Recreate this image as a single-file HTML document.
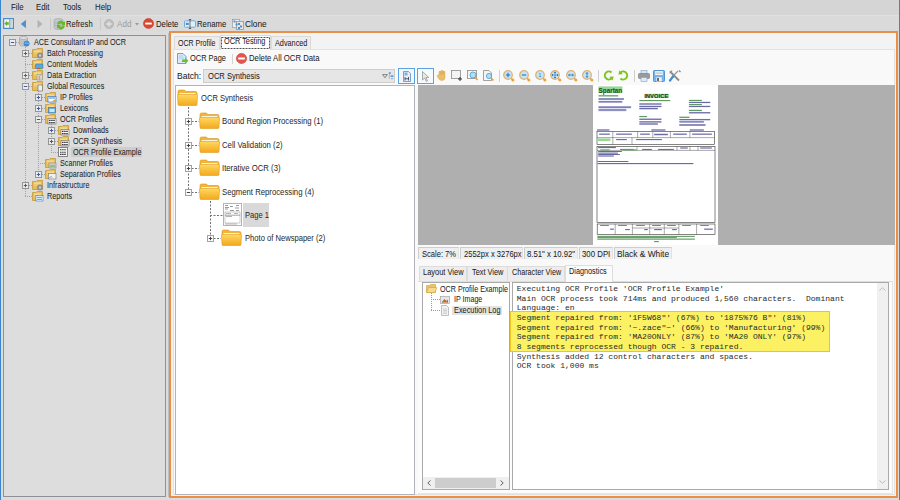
<!DOCTYPE html>
<html><head><meta charset="utf-8"><style>
*{margin:0;padding:0;box-sizing:border-box}
html,body{width:900px;height:500px;overflow:hidden}
body{position:relative;background:#e9e9e9;font-family:"Liberation Sans",sans-serif;font-size:9px;color:#1c1c1c}
.t{-webkit-text-stroke:.04px currentColor}
.tb{font-size:9.5px;-webkit-text-stroke:0;color:#262626}
.a{position:absolute}
.t{position:absolute;white-space:nowrap;transform:scaleX(.80);transform-origin:0 50%;line-height:11px;height:11px}
.m{position:absolute;white-space:pre;font-family:"Liberation Mono",monospace;font-size:8.04px;line-height:9.65px;color:#2a2a2a}
svg{position:absolute;overflow:visible}
</style></head><body>
<div class="a" style="left:0px;top:0px;width:900px;height:500px;background:#dcdcdc"></div>
<div class="a" style="left:0px;top:0px;width:1px;height:500px;background:#3b87cf"></div>
<div class="a" style="left:899px;top:0px;width:1px;height:500px;background:#3b87cf"></div>
<div class="a" style="left:1px;top:0px;width:898px;height:15px;background:#d5d5d5"></div>
<div class="t" style="left:10.6px;top:2px;;transform:scaleX(0.87)">File</div>
<div class="t" style="left:35.5px;top:2px;;transform:scaleX(0.87)">Edit</div>
<div class="t" style="left:63.2px;top:2px;;transform:scaleX(0.87)">Tools</div>
<div class="t" style="left:95px;top:2px;;transform:scaleX(0.87)">Help</div>
<div class="a" style="left:1px;top:15px;width:898px;height:16px;background:#dadada;border-top:1px solid #e0e0e0"></div>
<svg style="left:3px;top:18px" width="11" height="11" viewBox="0 0 11 11"><rect x="0.6" y="0.6" width="9.8" height="9.8" fill="#f2f2f2" stroke="#4a8fc9" stroke-width="1.2"/><rect x="6.4" y="1.2" width="1" height="8.6" fill="#4a8fc9"/><rect x="7.6" y="2" width="2.2" height="7" fill="#d4d4d4"/><path d="M1.3 5.5L4 3V4.3H5.8V6.7H4V8Z" fill="#62b52e"/></svg>
<svg style="left:20px;top:19px" width="7" height="10" viewBox="0 0 7 10"><path d="M6 0.8V9.2L0.8 5Z" fill="#4f92cf"/></svg>
<svg style="left:36.5px;top:19px" width="6" height="10" viewBox="0 0 6 10"><path d="M0.5 0.8V9.2L5.5 5Z" fill="#b3b3b3"/></svg>
<div class="a" style="left:50px;top:18px;width:1px;height:12px;background:#c8c8c8"></div>
<svg style="left:53px;top:18px" width="13" height="12" viewBox="0 0 13 12"><path d="M1 2.2Q1 0.5 5.5 0.5Q10 0.5 10 2.2V9.8Q10 11.5 5.5 11.5Q1 11.5 1 9.8Z" fill="#c3c7cb" stroke="#9ea3a8" stroke-width=".6"/><path d="M1.2 4.5Q5.5 6 9.8 4.5M1.2 7.2Q5.5 8.7 9.8 7.2" fill="none" stroke="#a5aaae" stroke-width=".6"/><path d="M4.2 6.3A3.6 3.6 0 0 1 10.8 4.2L12 3.2V7.3H8.2L9.4 6.2A2.2 2.2 0 0 0 5.8 6.6Z" fill="#66b82c"/><path d="M11.8 7.8A3.6 3.6 0 0 1 5.2 9.8L4 10.8V6.8H7.8L6.6 7.9A2.2 2.2 0 0 0 10.2 7.4Z" fill="#66b82c"/></svg>
<div class="t" style="left:66px;top:19px;;transform:scaleX(0.845)">Refresh</div>
<div class="a" style="left:100px;top:18px;width:1px;height:12px;background:#c8c8c8"></div>
<svg style="left:103.5px;top:18.5px" width="10" height="10" viewBox="0 0 10 10"><circle cx="5" cy="5" r="4.6" fill="#bdbdbd" stroke="#aaa" stroke-width=".5"/><path d="M5 2.3V7.7M2.3 5H7.7" stroke="#e4e4e4" stroke-width="1.3"/></svg>
<div class="t" style="left:116.5px;top:19px;color:#a0a0a0;transform:scaleX(0.9)">Add</div>
<svg style="left:135px;top:23px" width="4" height="3" viewBox="0 0 4 3"><path d="M0 0H4L2 2.5Z" fill="#999"/></svg>
<svg style="left:143px;top:18px" width="11" height="11" viewBox="0 0 11 11"><circle cx="5.5" cy="5.5" r="5.1" fill="#d9462f" stroke="#c23a2a" stroke-width=".5"/><rect x="2.2" y="4.6" width="6.6" height="1.9" fill="#fff"/></svg>
<div class="t" style="left:156.3px;top:19px;;transform:scaleX(0.86)">Delete</div>
<svg style="left:184px;top:19px" width="12" height="10" viewBox="0 0 12 10"><rect x="0.5" y="1.8" width="11" height="6.4" rx="1" fill="#e2eef8" stroke="#5c9bd2" stroke-width=".8"/><rect x="1.8" y="3.8" width="3" height="2.2" fill="#4a8fd0"/><path d="M6 0.5V9.5M4.8 0.5H7.2M4.8 9.5H7.2" stroke="#3a3a3a" stroke-width=".7"/></svg>
<div class="t" style="left:197.3px;top:19px;;transform:scaleX(0.86)">Rename</div>
<svg style="left:232px;top:18.5px" width="12" height="11" viewBox="0 0 12 11"><rect x="0.5" y="0.5" width="7" height="8" fill="#f0f0f0" stroke="#8a8a8a" stroke-width=".6"/><rect x="4.5" y="2.5" width="7" height="8" fill="#e6e6e6" stroke="#7a7a7a" stroke-width=".6"/><rect x="1.5" y="1.5" width="2" height="2" fill="#4a8fd0"/><rect x="3.5" y="4.5" width="2" height="2" fill="#4a8fd0"/><rect x="6" y="4" width="2" height="2" fill="#4a8fd0"/><rect x="8" y="6.5" width="2" height="2" fill="#4a8fd0"/><rect x="6" y="8" width="2" height="2" fill="#4a8fd0"/></svg>
<div class="t" style="left:245px;top:19px;;transform:scaleX(0.92)">Clone</div>
<div class="a" style="left:3px;top:35px;width:163px;height:462px;background:#dddddd;border:1px solid #8e9196"></div>
<div class="a" style="left:168px;top:33px;width:1px;height:464px;background:#bdbdbd"></div>
<svg style="left:25px;top:47px" width="1" height="150" viewBox="0 0 1 150"><path d="M0.5 0V150" stroke="#a3a3a3" stroke-width="1" stroke-dasharray="1 1"/></svg>
<svg style="left:38px;top:91px" width="1" height="84" viewBox="0 0 1 84"><path d="M0.5 0V84" stroke="#a3a3a3" stroke-width="1" stroke-dasharray="1 1"/></svg>
<svg style="left:51px;top:124px" width="1" height="29" viewBox="0 0 1 29"><path d="M0.5 0V29" stroke="#a3a3a3" stroke-width="1" stroke-dasharray="1 1"/></svg>
<div class="a" style="left:71px;top:147px;width:71px;height:10px;background:#cdcdcd"></div>
<svg style="left:12px;top:42px" width="7" height="1" viewBox="0 0 7 1"><path d="M0 0.5H7" stroke="#a3a3a3" stroke-width="1" stroke-dasharray="1 1"/></svg>
<svg style="left:9px;top:39px" width="7" height="7" viewBox="0 0 7 7"><rect x="0.5" y="0.5" width="6" height="6" fill="#ececec" stroke="#969696" stroke-width="1"/><path d="M1.8 3.5H5.2" stroke="#3c5c9c" stroke-width="1"/></svg>
<svg style="left:19px;top:36px" width="11" height="11" viewBox="0 0 11 11"><path d="M0.5 2V8.5A4 1.6 0 0 0 8.5 8.5V2" fill="#c9c9c9" stroke="#9a9a9a" stroke-width=".6"/><ellipse cx="4.5" cy="2" rx="4" ry="1.6" fill="#dedede" stroke="#9a9a9a" stroke-width=".6"/><path d="M0.7 4.6A4 1.5 0 0 0 8.3 4.6M0.7 6.8A4 1.5 0 0 0 8.3 6.8" fill="none" stroke="#a8a8a8" stroke-width=".5"/><circle cx="7.6" cy="7.6" r="2.7" fill="#3d8fd6" stroke="#2a70b0" stroke-width=".4"/><path d="M5.6 7.4Q7.6 6.2 9.8 7.8" stroke="#bfe0f8" stroke-width=".6" fill="none"/></svg>
<div class="t" style="left:34px;top:36.5px;">ACE Consultant IP and OCR</div>
<svg style="left:25px;top:53px" width="7" height="1" viewBox="0 0 7 1"><path d="M0 0.5H7" stroke="#a3a3a3" stroke-width="1" stroke-dasharray="1 1"/></svg>
<svg style="left:22px;top:50px" width="7" height="7" viewBox="0 0 7 7"><rect x="0.5" y="0.5" width="6" height="6" fill="#ececec" stroke="#969696" stroke-width="1"/><path d="M1.8 3.5H5.2" stroke="#3c5c9c" stroke-width="1"/><path d="M3.5 1.8V5.2" stroke="#3c5c9c" stroke-width="1"/></svg>
<svg style="left:32px;top:48px" width="11" height="10" viewBox="0 0 11 10"><path d="M0.5 1.5H4L5 0.5H10.5V9.5H0.5Z" fill="#e6bd5a" stroke="#c49a3a" stroke-width=".8"/><rect x="2" y="2.5" width="7" height="1.2" fill="#f7e3a8"/><rect x="2" y="4.5" width="7" height="1" fill="#f2d58a"/><circle cx="8" cy="7.5" r="3" fill="#8f8f8f"/><circle cx="8" cy="7.5" r="1.2" fill="#d0d0d0"/></svg>
<div class="t" style="left:47px;top:47.5px;">Batch Processing</div>
<svg style="left:25px;top:64px" width="7" height="1" viewBox="0 0 7 1"><path d="M0 0.5H7" stroke="#a3a3a3" stroke-width="1" stroke-dasharray="1 1"/></svg>
<svg style="left:32px;top:59px" width="11" height="10" viewBox="0 0 11 10"><path d="M0.5 1.5H4L5 0.5H10.5V9.5H0.5Z" fill="#e6bd5a" stroke="#c49a3a" stroke-width=".8"/><rect x="2" y="2.5" width="7" height="1.2" fill="#f7e3a8"/><rect x="2" y="4.5" width="7" height="1" fill="#f2d58a"/><rect x="3.5" y="5" width="7.5" height="4.5" rx="1" fill="#58a8dc" stroke="#2f6fae" stroke-width=".5"/><rect x="5" y="9" width="3" height="1.2" fill="#d84a4a"/><rect x="8" y="9" width="2" height="1.2" fill="#4bb04b"/></svg>
<div class="t" style="left:47px;top:58.5px;">Content Models</div>
<svg style="left:25px;top:75px" width="7" height="1" viewBox="0 0 7 1"><path d="M0 0.5H7" stroke="#a3a3a3" stroke-width="1" stroke-dasharray="1 1"/></svg>
<svg style="left:22px;top:72px" width="7" height="7" viewBox="0 0 7 7"><rect x="0.5" y="0.5" width="6" height="6" fill="#ececec" stroke="#969696" stroke-width="1"/><path d="M1.8 3.5H5.2" stroke="#3c5c9c" stroke-width="1"/><path d="M3.5 1.8V5.2" stroke="#3c5c9c" stroke-width="1"/></svg>
<svg style="left:32px;top:70px" width="11" height="10" viewBox="0 0 11 10"><path d="M0.5 1.5H4L5 0.5H10.5V9.5H0.5Z" fill="#e6bd5a" stroke="#c49a3a" stroke-width=".8"/><rect x="2" y="2.5" width="7" height="1.2" fill="#f7e3a8"/><rect x="2" y="4.5" width="7" height="1" fill="#f2d58a"/><rect x="5" y="4.5" width="5.5" height="5.5" fill="#d9d9d9" stroke="#8c8c8c" stroke-width=".5"/><path d="M8.5 5L6.5 7.8H8L7 10" stroke="#e0a800" stroke-width="1" fill="none"/></svg>
<div class="t" style="left:47px;top:69.5px;">Data Extraction</div>
<svg style="left:25px;top:86px" width="7" height="1" viewBox="0 0 7 1"><path d="M0 0.5H7" stroke="#a3a3a3" stroke-width="1" stroke-dasharray="1 1"/></svg>
<svg style="left:22px;top:83px" width="7" height="7" viewBox="0 0 7 7"><rect x="0.5" y="0.5" width="6" height="6" fill="#ececec" stroke="#969696" stroke-width="1"/><path d="M1.8 3.5H5.2" stroke="#3c5c9c" stroke-width="1"/></svg>
<svg style="left:32px;top:81px" width="11" height="10" viewBox="0 0 11 10"><path d="M0.5 1.5H4L5 0.5H10.5V9.5H0.5Z" fill="#e6bd5a" stroke="#c49a3a" stroke-width=".8"/><rect x="2" y="2.5" width="7" height="1.2" fill="#f7e3a8"/><rect x="2" y="4.5" width="7" height="1" fill="#f2d58a"/><rect x="6" y="4" width="4.5" height="6" fill="#eee" stroke="#666" stroke-width=".6"/></svg>
<div class="t" style="left:47px;top:80.5px;">Global Resources</div>
<svg style="left:38px;top:97px" width="7" height="1" viewBox="0 0 7 1"><path d="M0 0.5H7" stroke="#a3a3a3" stroke-width="1" stroke-dasharray="1 1"/></svg>
<svg style="left:35px;top:94px" width="7" height="7" viewBox="0 0 7 7"><rect x="0.5" y="0.5" width="6" height="6" fill="#ececec" stroke="#969696" stroke-width="1"/><path d="M1.8 3.5H5.2" stroke="#3c5c9c" stroke-width="1"/><path d="M3.5 1.8V5.2" stroke="#3c5c9c" stroke-width="1"/></svg>
<svg style="left:45px;top:92px" width="11" height="10" viewBox="0 0 11 10"><path d="M0.5 1.5H4L5 0.5H10.5V9.5H0.5Z" fill="#e6bd5a" stroke="#c49a3a" stroke-width=".8"/><rect x="2" y="2.5" width="7" height="1.2" fill="#f7e3a8"/><rect x="2" y="4.5" width="7" height="1" fill="#f2d58a"/><rect x="3" y="4.5" width="8" height="5.5" fill="#fff" stroke="#2f78c0" stroke-width=".7"/><rect x="4" y="5.5" width="6" height="1" fill="#3b88d0"/><path d="M7 9.5 L10.5 7V9.5Z" fill="#e28a2a"/></svg>
<div class="t" style="left:60px;top:91.5px;">IP Profiles</div>
<svg style="left:38px;top:108px" width="7" height="1" viewBox="0 0 7 1"><path d="M0 0.5H7" stroke="#a3a3a3" stroke-width="1" stroke-dasharray="1 1"/></svg>
<svg style="left:35px;top:105px" width="7" height="7" viewBox="0 0 7 7"><rect x="0.5" y="0.5" width="6" height="6" fill="#ececec" stroke="#969696" stroke-width="1"/><path d="M1.8 3.5H5.2" stroke="#3c5c9c" stroke-width="1"/><path d="M3.5 1.8V5.2" stroke="#3c5c9c" stroke-width="1"/></svg>
<svg style="left:45px;top:103px" width="11" height="10" viewBox="0 0 11 10"><path d="M0.5 1.5H4L5 0.5H10.5V9.5H0.5Z" fill="#e6bd5a" stroke="#c49a3a" stroke-width=".8"/><rect x="2" y="2.5" width="7" height="1.2" fill="#f7e3a8"/><rect x="2" y="4.5" width="7" height="1" fill="#f2d58a"/><rect x="3.5" y="4.5" width="7" height="5.5" fill="#6aaee0" stroke="#2f70b0" stroke-width=".6"/><rect x="4.5" y="6" width="5" height="3" fill="#cfe6f7"/></svg>
<div class="t" style="left:60px;top:102.5px;">Lexicons</div>
<svg style="left:38px;top:119px" width="7" height="1" viewBox="0 0 7 1"><path d="M0 0.5H7" stroke="#a3a3a3" stroke-width="1" stroke-dasharray="1 1"/></svg>
<svg style="left:35px;top:116px" width="7" height="7" viewBox="0 0 7 7"><rect x="0.5" y="0.5" width="6" height="6" fill="#ececec" stroke="#969696" stroke-width="1"/><path d="M1.8 3.5H5.2" stroke="#3c5c9c" stroke-width="1"/></svg>
<svg style="left:45px;top:114px" width="11" height="10" viewBox="0 0 11 10"><path d="M0.5 1.5H4L5 0.5H10.5V9.5H0.5Z" fill="#e6bd5a" stroke="#c49a3a" stroke-width=".8"/><rect x="2" y="2.5" width="7" height="1.2" fill="#f7e3a8"/><rect x="2" y="4.5" width="7" height="1" fill="#f2d58a"/><rect x="3" y="4.5" width="8" height="5.5" fill="#f7f7f7" stroke="#6a6a6a" stroke-width=".6"/><path d="M4 6.4H10M4 8.6H10" stroke="#3a3a3a" stroke-width="1.1" stroke-dasharray="1.6 .5"/></svg>
<div class="t" style="left:60px;top:113.5px;">OCR Profiles</div>
<svg style="left:51px;top:130px" width="7" height="1" viewBox="0 0 7 1"><path d="M0 0.5H7" stroke="#a3a3a3" stroke-width="1" stroke-dasharray="1 1"/></svg>
<svg style="left:48px;top:127px" width="7" height="7" viewBox="0 0 7 7"><rect x="0.5" y="0.5" width="6" height="6" fill="#ececec" stroke="#969696" stroke-width="1"/><path d="M1.8 3.5H5.2" stroke="#3c5c9c" stroke-width="1"/><path d="M3.5 1.8V5.2" stroke="#3c5c9c" stroke-width="1"/></svg>
<svg style="left:58px;top:125px" width="11" height="10" viewBox="0 0 11 10"><path d="M0.5 1.5H4L5 0.5H10.5V9.5H0.5Z" fill="#e6bd5a" stroke="#c49a3a" stroke-width=".8"/><rect x="2" y="2.5" width="7" height="1.2" fill="#f7e3a8"/><rect x="2" y="4.5" width="7" height="1" fill="#f2d58a"/><rect x="3" y="4.5" width="8" height="5.5" fill="#f7f7f7" stroke="#6a6a6a" stroke-width=".6"/><path d="M4 6.4H10M4 8.6H10" stroke="#3a3a3a" stroke-width="1.1" stroke-dasharray="1.6 .5"/></svg>
<div class="t" style="left:73px;top:124.5px;">Downloads</div>
<svg style="left:51px;top:141px" width="7" height="1" viewBox="0 0 7 1"><path d="M0 0.5H7" stroke="#a3a3a3" stroke-width="1" stroke-dasharray="1 1"/></svg>
<svg style="left:48px;top:138px" width="7" height="7" viewBox="0 0 7 7"><rect x="0.5" y="0.5" width="6" height="6" fill="#ececec" stroke="#969696" stroke-width="1"/><path d="M1.8 3.5H5.2" stroke="#3c5c9c" stroke-width="1"/><path d="M3.5 1.8V5.2" stroke="#3c5c9c" stroke-width="1"/></svg>
<svg style="left:58px;top:136px" width="11" height="10" viewBox="0 0 11 10"><path d="M0.5 1.5H4L5 0.5H10.5V9.5H0.5Z" fill="#e6bd5a" stroke="#c49a3a" stroke-width=".8"/><rect x="2" y="2.5" width="7" height="1.2" fill="#f7e3a8"/><rect x="2" y="4.5" width="7" height="1" fill="#f2d58a"/><rect x="3" y="4.5" width="8" height="5.5" fill="#f7f7f7" stroke="#6a6a6a" stroke-width=".6"/><path d="M4 6.4H10M4 8.6H10" stroke="#3a3a3a" stroke-width="1.1" stroke-dasharray="1.6 .5"/></svg>
<div class="t" style="left:73px;top:135.5px;">OCR Synthesis</div>
<svg style="left:51px;top:152px" width="7" height="1" viewBox="0 0 7 1"><path d="M0 0.5H7" stroke="#a3a3a3" stroke-width="1" stroke-dasharray="1 1"/></svg>
<svg style="left:58px;top:147px" width="10" height="10" viewBox="0 0 10 10"><rect x="0.5" y="0.5" width="9" height="9" fill="#f6f6f6" stroke="#6a6a6a" stroke-width=".8"/><path d="M2 2.8H8M2 5.2H8M2 7.4H8" stroke="#3a3a3a" stroke-width="1.1" stroke-dasharray="1.6 .5"/></svg>
<div class="t" style="left:73px;top:146.5px;">OCR Profile Example</div>
<svg style="left:38px;top:163px" width="7" height="1" viewBox="0 0 7 1"><path d="M0 0.5H7" stroke="#a3a3a3" stroke-width="1" stroke-dasharray="1 1"/></svg>
<svg style="left:45px;top:158px" width="11" height="10" viewBox="0 0 11 10"><path d="M0.5 1.5H4L5 0.5H10.5V9.5H0.5Z" fill="#e6bd5a" stroke="#c49a3a" stroke-width=".8"/><rect x="2" y="2.5" width="7" height="1.2" fill="#f7e3a8"/><rect x="2" y="4.5" width="7" height="1" fill="#f2d58a"/><rect x="4" y="5" width="7" height="5" fill="#cfcfcf" stroke="#888" stroke-width=".6"/><rect x="5" y="7.5" width="5" height="1" fill="#58a858"/></svg>
<div class="t" style="left:60px;top:157.5px;">Scanner Profiles</div>
<svg style="left:38px;top:174px" width="7" height="1" viewBox="0 0 7 1"><path d="M0 0.5H7" stroke="#a3a3a3" stroke-width="1" stroke-dasharray="1 1"/></svg>
<svg style="left:35px;top:171px" width="7" height="7" viewBox="0 0 7 7"><rect x="0.5" y="0.5" width="6" height="6" fill="#ececec" stroke="#969696" stroke-width="1"/><path d="M1.8 3.5H5.2" stroke="#3c5c9c" stroke-width="1"/><path d="M3.5 1.8V5.2" stroke="#3c5c9c" stroke-width="1"/></svg>
<svg style="left:45px;top:169px" width="11" height="10" viewBox="0 0 11 10"><path d="M0.5 1.5H4L5 0.5H10.5V9.5H0.5Z" fill="#e6bd5a" stroke="#c49a3a" stroke-width=".8"/><rect x="2" y="2.5" width="7" height="1.2" fill="#f7e3a8"/><rect x="2" y="4.5" width="7" height="1" fill="#f2d58a"/><rect x="3.5" y="4.5" width="7.5" height="5.5" fill="#f0f0f0" stroke="#777" stroke-width=".6"/><path d="M4.5 9L6 7.5L7 8.5" stroke="#2f78c0" stroke-width=".8" fill="none"/></svg>
<div class="t" style="left:60px;top:168.5px;">Separation Profiles</div>
<svg style="left:25px;top:185px" width="7" height="1" viewBox="0 0 7 1"><path d="M0 0.5H7" stroke="#a3a3a3" stroke-width="1" stroke-dasharray="1 1"/></svg>
<svg style="left:22px;top:182px" width="7" height="7" viewBox="0 0 7 7"><rect x="0.5" y="0.5" width="6" height="6" fill="#ececec" stroke="#969696" stroke-width="1"/><path d="M1.8 3.5H5.2" stroke="#3c5c9c" stroke-width="1"/><path d="M3.5 1.8V5.2" stroke="#3c5c9c" stroke-width="1"/></svg>
<svg style="left:32px;top:180px" width="11" height="10" viewBox="0 0 11 10"><path d="M0.5 1.5H4L5 0.5H10.5V9.5H0.5Z" fill="#e6bd5a" stroke="#c49a3a" stroke-width=".8"/><rect x="2" y="2.5" width="7" height="1.2" fill="#f7e3a8"/><rect x="2" y="4.5" width="7" height="1" fill="#f2d58a"/><circle cx="8" cy="7.5" r="3" fill="#8f8f8f"/><circle cx="8" cy="7.5" r="1.2" fill="#d0d0d0"/></svg>
<div class="t" style="left:47px;top:179.5px;">Infrastructure</div>
<svg style="left:25px;top:196px" width="7" height="1" viewBox="0 0 7 1"><path d="M0 0.5H7" stroke="#a3a3a3" stroke-width="1" stroke-dasharray="1 1"/></svg>
<svg style="left:32px;top:191px" width="11" height="10" viewBox="0 0 11 10"><path d="M0.5 1.5H4L5 0.5H10.5V9.5H0.5Z" fill="#e6bd5a" stroke="#c49a3a" stroke-width=".8"/><rect x="2" y="2.5" width="7" height="1.2" fill="#f7e3a8"/><rect x="2" y="4.5" width="7" height="1" fill="#f2d58a"/><rect x="4" y="4.5" width="7" height="5.5" fill="#fff" stroke="#2f78c0" stroke-width=".6"/><path d="M5 6.3H10M5 8.3H10" stroke="#3b88d0" stroke-width=".9"/></svg>
<div class="t" style="left:47px;top:190.5px;">Reports</div>
<div class="a" style="left:169px;top:31px;width:729px;height:467px;border:2px solid #e98f48;background:#f3f3f3"></div>
<div class="a" style="left:174px;top:36px;width:46px;height:14px;background:#ededed;border:1px solid #dadada;border-bottom:none"></div>
<div class="a" style="left:271px;top:36px;width:40px;height:14px;background:#ededed;border:1px solid #dadada;border-bottom:none"></div>
<div class="a" style="left:173px;top:49px;width:722px;height:446px;background:#f9f9f9;border:1px solid #e2e2e2"></div>
<div class="a" style="left:220px;top:35px;width:51px;height:15px;background:#fff;border:1px solid #dadada;border-bottom:none"></div>
<svg style="left:221px;top:37px" width="49" height="12" viewBox="0 0 49 12"><rect x="0.5" y="0.5" width="48" height="11" fill="none" stroke="#505050" stroke-width="1" stroke-dasharray="2 1"/></svg>
<div class="t" style="left:177.8px;top:37.5px;;transform:scaleX(0.78)">OCR Profile</div>
<div class="t" style="left:224px;top:36px;;transform:scaleX(0.815)">OCR Testing</div>
<div class="t" style="left:274.8px;top:37.5px;;transform:scaleX(0.81)">Advanced</div>
<svg style="left:177px;top:53px" width="12" height="11" viewBox="0 0 12 11"><path d="M0.5 0.5H6L9 3.5V10.5H0.5Z" fill="#dbe9f6" stroke="#4a8fcf" stroke-width=".8"/><path d="M2 3H6M2 5H7" stroke="#9cc2e6" stroke-width=".8"/><path d="M5 6.5H8V4.8L11.5 7.8L8 10.8V9H5Z" fill="#6cbf2e"/></svg>
<div class="t" style="left:189.8px;top:52.5px;;transform:scaleX(0.825)">OCR Page</div>
<div class="a" style="left:232px;top:54px;width:1px;height:10px;background:#d4d4d4"></div>
<svg style="left:236px;top:53px" width="11" height="11" viewBox="0 0 11 11"><circle cx="5.5" cy="5.5" r="5.1" fill="#e4554d" stroke="#c23a33" stroke-width=".6"/><rect x="2.2" y="4.5" width="6.6" height="2" fill="#fff"/></svg>
<div class="t" style="left:249.3px;top:52.5px;;transform:scaleX(0.86)">Delete All OCR Data</div>
<div class="t" style="left:177px;top:71px;;transform:scaleX(0.95)">Batch:</div>
<div class="a" style="left:203px;top:69px;width:192px;height:14px;background:#e6e6e6;border:1px solid #cdcdcd"></div>
<div class="t" style="left:208px;top:71px;;transform:scaleX(0.84)">OCR Synthesis</div>
<svg style="left:382px;top:74px" width="6" height="5" viewBox="0 0 6 5"><path d="M0.6 0.6H5.4L3 3.8Z" fill="none" stroke="#6a6a6a" stroke-width=".8"/></svg>
<svg style="left:388px;top:72px" width="6" height="8" viewBox="0 0 6 8"><circle cx="1.8" cy="1.2" r="1.1" fill="#5d9fdc"/><rect x="2.5" y="3.3" width="3" height="1.8" rx=".6" fill="#5d9fdc"/><path d="M2.6 6.3H5.4L4 7.6Z" fill="#5d9fdc"/><path d="M1.3 2.2V6.8" stroke="#888" stroke-width=".5"/></svg>
<div class="a" style="left:175px;top:85px;width:240px;height:410px;background:#fff;border:1px solid #b0b4ba"></div>
<svg style="left:177px;top:89px" width="21" height="17" viewBox="0 0 21 17"><defs><linearGradient id="fg" x1="0" y1="0" x2="0" y2="1"><stop offset="0" stop-color="#ffd860"/><stop offset="1" stop-color="#f3a81c"/></linearGradient></defs><path d="M1 2.5Q1 1 2.5 1H7.5L9 2.5H18.5Q20 2.5 20 4V8H1Z" fill="#f2b632" stroke="#d9962a" stroke-width=".6"/><rect x="2.5" y="4" width="16" height="4" fill="#fbf4dc"/><path d="M0.5 6.5Q0.5 5.5 1.5 5.5H19.5Q20.5 5.5 20.5 6.5L20 15.5Q20 16.5 19 16.5H2Q1 16.5 1 15.5Z" fill="url(#fg)" stroke="#e09a22" stroke-width=".6"/></svg>
<div class="t tb" style="left:200.5px;top:92px;">OCR Synthesis</div>
<svg style="left:188px;top:107px" width="1" height="85" viewBox="0 0 1 85"><path d="M0.5 0V85" stroke="#707070" stroke-width="1" stroke-dasharray="2 1.5"/></svg>
<svg style="left:188px;top:121px" width="11" height="1" viewBox="0 0 11 1"><path d="M0 0.5H11" stroke="#707070" stroke-width="1" stroke-dasharray="2 1.5"/></svg>
<svg style="left:185px;top:118px" width="7" height="7" viewBox="0 0 7 7"><rect x="0.5" y="0.5" width="6" height="6" fill="#fff" stroke="#a2a2a2" stroke-width="1"/><path d="M1.8 3.5H5.2" stroke="#333" stroke-width=".9"/><path d="M3.5 1.8V5.2" stroke="#333" stroke-width=".9"/></svg>
<svg style="left:199px;top:112px" width="21" height="17" viewBox="0 0 21 17"><defs><linearGradient id="fg" x1="0" y1="0" x2="0" y2="1"><stop offset="0" stop-color="#ffd860"/><stop offset="1" stop-color="#f3a81c"/></linearGradient></defs><path d="M1 2.5Q1 1 2.5 1H7.5L9 2.5H18.5Q20 2.5 20 4V8H1Z" fill="#f2b632" stroke="#d9962a" stroke-width=".6"/><rect x="2.5" y="4" width="16" height="4" fill="#fbf4dc"/><path d="M0.5 6.5Q0.5 5.5 1.5 5.5H19.5Q20.5 5.5 20.5 6.5L20 15.5Q20 16.5 19 16.5H2Q1 16.5 1 15.5Z" fill="url(#fg)" stroke="#e09a22" stroke-width=".6"/></svg>
<div class="t tb" style="left:221.6px;top:115.4px;;transform:scaleX(0.815)">Bound Region Processing (1)</div>
<svg style="left:188px;top:145px" width="11" height="1" viewBox="0 0 11 1"><path d="M0 0.5H11" stroke="#707070" stroke-width="1" stroke-dasharray="2 1.5"/></svg>
<svg style="left:185px;top:142px" width="7" height="7" viewBox="0 0 7 7"><rect x="0.5" y="0.5" width="6" height="6" fill="#fff" stroke="#a2a2a2" stroke-width="1"/><path d="M1.8 3.5H5.2" stroke="#333" stroke-width=".9"/><path d="M3.5 1.8V5.2" stroke="#333" stroke-width=".9"/></svg>
<svg style="left:199px;top:136px" width="21" height="17" viewBox="0 0 21 17"><defs><linearGradient id="fg" x1="0" y1="0" x2="0" y2="1"><stop offset="0" stop-color="#ffd860"/><stop offset="1" stop-color="#f3a81c"/></linearGradient></defs><path d="M1 2.5Q1 1 2.5 1H7.5L9 2.5H18.5Q20 2.5 20 4V8H1Z" fill="#f2b632" stroke="#d9962a" stroke-width=".6"/><rect x="2.5" y="4" width="16" height="4" fill="#fbf4dc"/><path d="M0.5 6.5Q0.5 5.5 1.5 5.5H19.5Q20.5 5.5 20.5 6.5L20 15.5Q20 16.5 19 16.5H2Q1 16.5 1 15.5Z" fill="url(#fg)" stroke="#e09a22" stroke-width=".6"/></svg>
<div class="t tb" style="left:221.6px;top:138.8px;;transform:scaleX(0.815)">Cell Validation (2)</div>
<svg style="left:188px;top:168px" width="11" height="1" viewBox="0 0 11 1"><path d="M0 0.5H11" stroke="#707070" stroke-width="1" stroke-dasharray="2 1.5"/></svg>
<svg style="left:185px;top:165px" width="7" height="7" viewBox="0 0 7 7"><rect x="0.5" y="0.5" width="6" height="6" fill="#fff" stroke="#a2a2a2" stroke-width="1"/><path d="M1.8 3.5H5.2" stroke="#333" stroke-width=".9"/><path d="M3.5 1.8V5.2" stroke="#333" stroke-width=".9"/></svg>
<svg style="left:199px;top:159px" width="21" height="17" viewBox="0 0 21 17"><defs><linearGradient id="fg" x1="0" y1="0" x2="0" y2="1"><stop offset="0" stop-color="#ffd860"/><stop offset="1" stop-color="#f3a81c"/></linearGradient></defs><path d="M1 2.5Q1 1 2.5 1H7.5L9 2.5H18.5Q20 2.5 20 4V8H1Z" fill="#f2b632" stroke="#d9962a" stroke-width=".6"/><rect x="2.5" y="4" width="16" height="4" fill="#fbf4dc"/><path d="M0.5 6.5Q0.5 5.5 1.5 5.5H19.5Q20.5 5.5 20.5 6.5L20 15.5Q20 16.5 19 16.5H2Q1 16.5 1 15.5Z" fill="url(#fg)" stroke="#e09a22" stroke-width=".6"/></svg>
<div class="t tb" style="left:221.6px;top:162.3px;;transform:scaleX(0.815)">Iterative OCR (3)</div>
<svg style="left:188px;top:192px" width="11" height="1" viewBox="0 0 11 1"><path d="M0 0.5H11" stroke="#707070" stroke-width="1" stroke-dasharray="2 1.5"/></svg>
<svg style="left:185px;top:189px" width="7" height="7" viewBox="0 0 7 7"><rect x="0.5" y="0.5" width="6" height="6" fill="#fff" stroke="#a2a2a2" stroke-width="1"/><path d="M1.8 3.5H5.2" stroke="#333" stroke-width=".9"/></svg>
<svg style="left:199px;top:183px" width="21" height="17" viewBox="0 0 21 17"><defs><linearGradient id="fg" x1="0" y1="0" x2="0" y2="1"><stop offset="0" stop-color="#ffd860"/><stop offset="1" stop-color="#f3a81c"/></linearGradient></defs><path d="M1 2.5Q1 1 2.5 1H7.5L9 2.5H18.5Q20 2.5 20 4V8H1Z" fill="#f2b632" stroke="#d9962a" stroke-width=".6"/><rect x="2.5" y="4" width="16" height="4" fill="#fbf4dc"/><path d="M0.5 6.5Q0.5 5.5 1.5 5.5H19.5Q20.5 5.5 20.5 6.5L20 15.5Q20 16.5 19 16.5H2Q1 16.5 1 15.5Z" fill="url(#fg)" stroke="#e09a22" stroke-width=".6"/></svg>
<div class="t tb" style="left:221.6px;top:185.7px;;transform:scaleX(0.815)">Segment Reprocessing (4)</div>
<svg style="left:210px;top:201px" width="1" height="37" viewBox="0 0 1 37"><path d="M0.5 0V37" stroke="#707070" stroke-width="1" stroke-dasharray="2 1.5"/></svg>
<svg style="left:210px;top:215px" width="13" height="1" viewBox="0 0 13 1"><path d="M0 0.5H13" stroke="#707070" stroke-width="1" stroke-dasharray="2 1.5"/></svg>
<svg style="left:210px;top:238px" width="11" height="1" viewBox="0 0 11 1"><path d="M0 0.5H11" stroke="#707070" stroke-width="1" stroke-dasharray="2 1.5"/></svg>
<svg style="left:207px;top:235px" width="7" height="7" viewBox="0 0 7 7"><rect x="0.5" y="0.5" width="6" height="6" fill="#fff" stroke="#a2a2a2" stroke-width="1"/><path d="M1.8 3.5H5.2" stroke="#333" stroke-width=".9"/><path d="M3.5 1.8V5.2" stroke="#333" stroke-width=".9"/></svg>
<svg style="left:223px;top:203px" width="19" height="23" viewBox="0 0 19 23"><rect x="0.5" y="0.5" width="18" height="22" fill="#fff" stroke="#b4b4b4"/><path d="M2 2.5H5M7 3.5H10M13 2.5H16M2 4.5H6M2 6H5M12 5H16M7 7.5H11M13 7.5H16" stroke="#555" stroke-width=".6"/><rect x="2" y="9" width="15" height="3" fill="none" stroke="#777" stroke-width=".4"/><rect x="2" y="12.5" width="15" height="7.5" fill="none" stroke="#888" stroke-width=".4"/><path d="M3 10.5H8M3 13.5H9M11 10.5H15M2 21H14" stroke="#666" stroke-width=".5"/></svg>
<div class="a" style="left:243px;top:203px;width:26px;height:24px;background:#d9d9d9"></div>
<div class="t tb" style="left:245px;top:209px;">Page 1</div>
<svg style="left:221px;top:229px" width="21" height="17" viewBox="0 0 21 17"><defs><linearGradient id="fg" x1="0" y1="0" x2="0" y2="1"><stop offset="0" stop-color="#ffd860"/><stop offset="1" stop-color="#f3a81c"/></linearGradient></defs><path d="M1 2.5Q1 1 2.5 1H7.5L9 2.5H18.5Q20 2.5 20 4V8H1Z" fill="#f2b632" stroke="#d9962a" stroke-width=".6"/><rect x="2.5" y="4" width="16" height="4" fill="#fbf4dc"/><path d="M0.5 6.5Q0.5 5.5 1.5 5.5H19.5Q20.5 5.5 20.5 6.5L20 15.5Q20 16.5 19 16.5H2Q1 16.5 1 15.5Z" fill="url(#fg)" stroke="#e09a22" stroke-width=".6"/></svg>
<div class="t tb" style="left:245px;top:232px;">Photo of Newspaper (2)</div>
<div class="a" style="left:398px;top:68px;width:17px;height:16px;background:#f1f7fc;border:1px solid #5aa2e4"></div>
<svg style="left:403px;top:71px" width="8" height="11" viewBox="0 0 8 11"><path d="M0.5 0.5H5.5L7.5 2.5V10.5H0.5Z" fill="#e6eef6" stroke="#4a7fb5" stroke-width=".7"/><path d="M2 6V9.5M5.5 6V9.5M2 7.8H5.5" stroke="#335" stroke-width=".8"/><rect x="1.5" y="1.5" width="3" height="3" fill="#7fb0de"/></svg>
<div class="a" style="left:417px;top:68px;width:17px;height:16px;background:#f7fafd;border:1px solid #5aa2e4"></div>
<svg style="left:422px;top:71px" width="7" height="11" viewBox="0 0 7 11"><path d="M0.5 0.5V9L2.7 7L4.3 10.5L5.5 10L4 6.5H6.8Z" fill="#e8e8e8" stroke="#8c8c8c" stroke-width=".7"/></svg>
<svg style="left:437px;top:70px" width="9" height="11" viewBox="0 0 9 11"><path d="M2 5V2Q2 1 3 1Q4 1 4 2V4.5V1.3Q4 0.3 5 0.3Q6 0.3 6 1.3V4.5V1.8Q6 1 7 1Q8 1 8 2V7Q8 10.5 5 10.5Q2.5 10.5 1.5 8.5L0.3 6Q0 5 1 5Z" fill="#eabf6a" stroke="#d8a24a" stroke-width=".5"/></svg>
<svg style="left:451px;top:70px" width="12" height="11" viewBox="0 0 12 11"><rect x="0.5" y="0.5" width="9" height="8" fill="#f4f4f4" stroke="#8c8c8c" stroke-width=".8"/><path d="M9 7V11M7 9H11" stroke="#333" stroke-width="1"/></svg>
<svg style="left:467px;top:70px" width="12" height="11" viewBox="0 0 12 11"><rect x="0.5" y="0.5" width="9" height="8" fill="#f4f4f4" stroke="#8c8c8c" stroke-width=".8"/><circle cx="6" cy="5" r="3" fill="#aee0f5" stroke="#4a9ad0" stroke-width=".8"/><path d="M8 7.5L10.5 10" stroke="#e8a030" stroke-width="1.6"/></svg>
<svg style="left:483px;top:70px" width="12" height="11" viewBox="0 0 12 11"><path d="M0.5 0.5H6L8.5 3V10.5H0.5Z" fill="#f4f4f4" stroke="#8c8c8c" stroke-width=".8"/><circle cx="6" cy="6" r="2.6" fill="#aee0f5" stroke="#4a9ad0" stroke-width=".8"/><path d="M8 8L10.5 10.5" stroke="#e8a030" stroke-width="1.6"/></svg>
<div class="a" style="left:499px;top:70px;width:1px;height:12px;background:#d0d0d0"></div>
<svg style="left:503px;top:69.5px" width="12" height="12" viewBox="0 0 12 12"><path d="M8.2 8.4L9.6 9.8" stroke="#e0a04a" stroke-width="1.6"/><circle cx="5" cy="5" r="4.3" fill="#c3e5fa" stroke="#e2b06a" stroke-width="1.2"/><circle cx="9.9" cy="10" r="1.5" fill="#f2a52e"/><path d="M2.8 5H7.2M5 2.8V7.2" stroke="#2a6fb8" stroke-width="1.1"/></svg>
<svg style="left:519px;top:69.5px" width="12" height="12" viewBox="0 0 12 12"><path d="M8.2 8.4L9.6 9.8" stroke="#e0a04a" stroke-width="1.6"/><circle cx="5" cy="5" r="4.3" fill="#c3e5fa" stroke="#e2b06a" stroke-width="1.2"/><circle cx="9.9" cy="10" r="1.5" fill="#f2a52e"/><path d="M2.8 5H7.2" stroke="#2a6fb8" stroke-width="1.1"/></svg>
<svg style="left:535px;top:69.5px" width="12" height="12" viewBox="0 0 12 12"><path d="M8.2 8.4L9.6 9.8" stroke="#e0a04a" stroke-width="1.6"/><circle cx="5" cy="5" r="4.3" fill="#c3e5fa" stroke="#e2b06a" stroke-width="1.2"/><circle cx="9.9" cy="10" r="1.5" fill="#f2a52e"/><text x="5" y="7" font-size="5" text-anchor="middle" fill="#2a6fb8" font-family="Liberation Sans">1</text></svg>
<svg style="left:550px;top:69.5px" width="12" height="12" viewBox="0 0 12 12"><path d="M8.2 8.4L9.6 9.8" stroke="#e0a04a" stroke-width="1.6"/><circle cx="5" cy="5" r="4.3" fill="#c3e5fa" stroke="#e2b06a" stroke-width="1.2"/><circle cx="9.9" cy="10" r="1.5" fill="#f2a52e"/><path d="M5 1.8V8.2M1.8 5H8.2" stroke="#3a7fc0" stroke-width=".7"/><path d="M5 1.5L3.8 3H6.2ZM5 8.5L3.8 7H6.2ZM1.5 5L3 3.8V6.2ZM8.5 5L7 3.8V6.2Z" fill="#2a6fb8"/></svg>
<svg style="left:566px;top:69.5px" width="12" height="12" viewBox="0 0 12 12"><path d="M8.2 8.4L9.6 9.8" stroke="#e0a04a" stroke-width="1.6"/><circle cx="5" cy="5" r="4.3" fill="#c3e5fa" stroke="#e2b06a" stroke-width="1.2"/><circle cx="9.9" cy="10" r="1.5" fill="#f2a52e"/><path d="M2.5 5H7.5M2.5 5L3.8 4M2.5 5L3.8 6M7.5 5L6.2 4M7.5 5L6.2 6" stroke="#2a6fb8" stroke-width=".8"/></svg>
<svg style="left:582px;top:69.5px" width="12" height="12" viewBox="0 0 12 12"><path d="M8.2 8.4L9.6 9.8" stroke="#e0a04a" stroke-width="1.6"/><circle cx="5" cy="5" r="4.3" fill="#c3e5fa" stroke="#e2b06a" stroke-width="1.2"/><circle cx="9.9" cy="10" r="1.5" fill="#f2a52e"/><path d="M5 2.5V7.5M5 2.5L4 3.8M5 2.5L6 3.8M5 7.5L4 6.2M5 7.5L6 6.2" stroke="#2a6fb8" stroke-width=".8"/></svg>
<div class="a" style="left:598px;top:70px;width:1px;height:12px;background:#d0d0d0"></div>
<svg style="left:603px;top:70px" width="11" height="11" viewBox="0 0 11 11"><path d="M8.6 2.6A4 4 0 1 0 8.4 8.6" fill="none" stroke="#7cc51f" stroke-width="2"/><path d="M6.3 6.8L10.6 6.4L9.6 10.8Z" fill="#7cc51f"/></svg>
<svg style="left:618px;top:70px" width="11" height="11" viewBox="0 0 11 11"><path d="M2.4 8.4A4 4 0 1 0 2.6 2.4" fill="none" stroke="#7cc51f" stroke-width="2"/><path d="M4.7 4.2L0.4 4.6L1.4 0.2Z" fill="#7cc51f"/></svg>
<div class="a" style="left:634px;top:70px;width:1px;height:12px;background:#d0d0d0"></div>
<svg style="left:638px;top:70px" width="12" height="12" viewBox="0 0 12 12"><rect x="3" y="0.5" width="6" height="3.5" fill="#d4e8f6" stroke="#7aa6c8" stroke-width=".6"/><rect x="0.5" y="3.5" width="11" height="5" rx=".8" fill="#9a9a9a" stroke="#7a7a7a" stroke-width=".6"/><rect x="3" y="7.5" width="6" height="4" fill="#dcedf8" stroke="#7aa6c8" stroke-width=".6"/></svg>
<svg style="left:653px;top:70px" width="12" height="12" viewBox="0 0 12 12"><rect x="0.5" y="0.5" width="11" height="11" rx=".8" fill="#78b6ea" stroke="#3f8fd6" stroke-width=".9"/><rect x="2.3" y="1" width="7.4" height="4" fill="#fafafa"/><path d="M3 2.2H9M3 3.6H9" stroke="#9a9a9a" stroke-width=".5"/><rect x="3.3" y="7.3" width="5.4" height="4.2" fill="#eef4fa"/><rect x="4.3" y="8" width="1.4" height="3" fill="#333"/></svg>
<svg style="left:669px;top:70px" width="12" height="12" viewBox="0 0 12 12"><path d="M2 2.5L10 10.5" stroke="#8a8a8a" stroke-width="1.8"/><path d="M0.5 3.5A2.5 2.5 0 0 1 3.5 0.5L2.5 2.5Z" fill="#8a8a8a"/><path d="M9 1L3 7" stroke="#9a9a9a" stroke-width="1.2"/><path d="M4 6.5L1 10.5" stroke="#3d8ed4" stroke-width="2.2" stroke-linecap="round"/><path d="M10 0.5L11.5 2" stroke="#8a8a8a" stroke-width="1.4"/></svg>
<div class="a" style="left:418px;top:85px;width:477px;height:160px;background:#afafaf"></div>
<div class="a" style="left:593px;top:85px;width:125px;height:160px;background:#fff"></div>
<svg style="left:592px;top:84px" width="126" height="161" viewBox="0 0 126 161"><rect x="6.4" y="2.4" width="24.0" height="6.4" fill="#9ad69a" /><text x="6.6" y="8.6" font-size="8" font-weight="bold" fill="#145214" font-family="Liberation Sans" textLength="23.6" lengthAdjust="spacingAndGlyphs">Spartan</text><rect x="6.4" y="11.2" width="20.0" height="1.3000000000000007" fill="#a6d8a6"/><rect x="6.7" y="11.5" width="19.4" height="0.7" fill="#2f6f2f" opacity=".85"/><rect x="6.4" y="14" width="25.6" height="2" fill="#b9b9e0"/><rect x="6.7" y="14.65" width="25.0" height="0.7" fill="#34347a" opacity=".85"/><rect x="6.4" y="16.8" width="24.0" height="2.099999999999998" fill="#b9b9e0"/><rect x="6.7" y="17.5" width="23.4" height="0.7" fill="#34347a" opacity=".85"/><rect x="6.4" y="22" width="32.800000000000004" height="2.3000000000000007" fill="#b9b9e0"/><rect x="6.7" y="22.799999999999997" width="32.2" height="0.7" fill="#34347a" opacity=".85"/><rect x="6.4" y="24.8" width="28.0" height="2.3999999999999986" fill="#b9b9e0"/><rect x="6.7" y="25.65" width="27.4" height="0.7" fill="#34347a" opacity=".85"/><rect x="53" y="9.8" width="23.799999999999997" height="4.199999999999999" fill="#9ad69a" /><text x="52.2" y="13.7" font-size="4.8" font-weight="bold" fill="#173f17" font-family="Liberation Sans" textLength="24.3" lengthAdjust="spacingAndGlyphs">INVOICE</text><rect x="47.2" y="16" width="31.200000000000003" height="1.3000000000000007" fill="#a6d8a6"/><rect x="47.5" y="16.299999999999997" width="30.6" height="0.7" fill="#2f6f2f" opacity=".85"/><rect x="47.2" y="19.2" width="22.39999999999999" height="1.6000000000000014" fill="#b9b9e0"/><rect x="47.5" y="19.65" width="21.79999999999999" height="0.7" fill="#34347a" opacity=".85"/><rect x="47.2" y="21.6" width="22.39999999999999" height="1.5999999999999979" fill="#b9b9e0"/><rect x="47.5" y="22.049999999999997" width="21.79999999999999" height="0.7" fill="#34347a" opacity=".85"/><rect x="47.2" y="23.7" width="18.799999999999997" height="1.9000000000000021" fill="#b9b9e0"/><rect x="47.5" y="24.299999999999997" width="18.199999999999996" height="0.7" fill="#34347a" opacity=".85"/><rect x="96.8" y="15.7" width="13.200000000000003" height="1.3000000000000007" fill="#a6d8a6"/><rect x="97.1" y="16.0" width="12.600000000000003" height="0.7" fill="#2f6f2f" opacity=".85"/><rect x="96.8" y="17.6" width="21.60000000000001" height="1.5999999999999979" fill="#b9b9e0"/><rect x="97.1" y="18.049999999999997" width="21.000000000000007" height="0.7" fill="#34347a" opacity=".85"/><rect x="96.8" y="20" width="13.200000000000003" height="1.3000000000000007" fill="#a6d8a6"/><rect x="97.1" y="20.299999999999997" width="12.600000000000003" height="0.7" fill="#2f6f2f" opacity=".85"/><rect x="96.8" y="21.6" width="21.60000000000001" height="1.5999999999999979" fill="#b9b9e0"/><rect x="97.1" y="22.049999999999997" width="21.000000000000007" height="0.7" fill="#34347a" opacity=".85"/><rect x="96.8" y="25.6" width="13.200000000000003" height="1.5999999999999979" fill="#a6d8a6"/><rect x="97.1" y="26.049999999999997" width="12.600000000000003" height="0.7" fill="#2f6f2f" opacity=".85"/><rect x="96.8" y="28" width="21.60000000000001" height="1.6000000000000014" fill="#b9b9e0"/><rect x="97.1" y="28.45" width="21.000000000000007" height="0.7" fill="#34347a" opacity=".85"/><rect x="47.2" y="32" width="8.0" height="1.2999999999999972" fill="#a6d8a6"/><rect x="47.5" y="32.3" width="7.4" height="0.7" fill="#2f6f2f" opacity=".85"/><rect x="47.2" y="34.4" width="22.39999999999999" height="1.6000000000000014" fill="#b9b9e0"/><rect x="47.5" y="34.85" width="21.79999999999999" height="0.7" fill="#34347a" opacity=".85"/><rect x="47.2" y="37.1" width="22.39999999999999" height="1.6000000000000014" fill="#b9b9e0"/><rect x="47.5" y="37.550000000000004" width="21.79999999999999" height="0.7" fill="#34347a" opacity=".85"/><rect x="47.2" y="39.2" width="18.799999999999997" height="1.5999999999999943" fill="#b9b9e0"/><rect x="47.5" y="39.65" width="18.199999999999996" height="0.7" fill="#34347a" opacity=".85"/><rect x="87.2" y="32.5" width="10.399999999999991" height="1.5" fill="#a6d8a6"/><rect x="87.5" y="32.9" width="9.799999999999992" height="0.7" fill="#2f6f2f" opacity=".85"/><rect x="87.2" y="34.9" width="31.200000000000003" height="1.6000000000000014" fill="#b9b9e0"/><rect x="87.5" y="35.35" width="30.6" height="0.7" fill="#34347a" opacity=".85"/><rect x="87.2" y="37.1" width="24.799999999999997" height="1.6000000000000014" fill="#b9b9e0"/><rect x="87.5" y="37.550000000000004" width="24.199999999999996" height="0.7" fill="#34347a" opacity=".85"/><rect x="87.2" y="40" width="26.39999999999999" height="2" fill="#b9b9e0"/><rect x="87.5" y="40.65" width="25.79999999999999" height="0.7" fill="#34347a" opacity=".85"/><rect x="4.8" y="45.3" width="12.8" height="1.4000000000000057" fill="#b9b9e0"/><rect x="5.1" y="45.65" width="12.200000000000001" height="0.7" fill="#34347a" opacity=".85"/><rect x="59.2" y="45.3" width="14.399999999999991" height="1.4000000000000057" fill="#b9b9e0"/><rect x="59.5" y="45.65" width="13.799999999999992" height="0.7" fill="#34347a" opacity=".85"/><rect x="97.6" y="45.3" width="14.400000000000006" height="1.4000000000000057" fill="#b9b9e0"/><rect x="97.89999999999999" y="45.65" width="13.800000000000006" height="0.7" fill="#34347a" opacity=".85"/><rect x="5" y="47.5" width="117.4" height="13" fill="none" stroke="#333" stroke-width=".6"/><path d="M5 53.6H122.4M20.8 47.5V60.5M45.6 47.5V53.6M60.8 47.5V53.6M78.4 47.5V53.6M97.9 47.5V53.6M40 53.6V60.5" stroke="#444" stroke-width=".45"/><rect x="6" y="54.4" width="12.399999999999999" height="2.700000000000003" fill="#9ad69a" /><rect x="7" y="49.5" width="11" height="1.2999999999999972" fill="#b9b9e0"/><rect x="7.3" y="49.8" width="10.4" height="0.7" fill="#34347a" opacity=".85"/><rect x="24" y="49.5" width="16" height="1.2999999999999972" fill="#b9b9e0"/><rect x="24.3" y="49.8" width="15.4" height="0.7" fill="#34347a" opacity=".85"/><rect x="48" y="49.5" width="10" height="1.2999999999999972" fill="#b9b9e0"/><rect x="48.3" y="49.8" width="9.4" height="0.7" fill="#34347a" opacity=".85"/><rect x="62" y="49.5" width="14" height="2.0" fill="#b9b9e0"/><rect x="62.3" y="50.15" width="13.4" height="0.7" fill="#34347a" opacity=".85"/><rect x="81" y="49.5" width="14" height="1.2999999999999972" fill="#b9b9e0"/><rect x="81.3" y="49.8" width="13.4" height="0.7" fill="#34347a" opacity=".85"/><rect x="100" y="49.5" width="20" height="1.2999999999999972" fill="#b9b9e0"/><rect x="100.3" y="49.8" width="19.4" height="0.7" fill="#34347a" opacity=".85"/><rect x="24" y="55" width="11" height="1.2999999999999972" fill="#b9b9e0"/><rect x="24.3" y="55.3" width="10.4" height="0.7" fill="#34347a" opacity=".85"/><rect x="44" y="55" width="26" height="1.2999999999999972" fill="#b9b9e0"/><rect x="44.3" y="55.3" width="25.4" height="0.7" fill="#34347a" opacity=".85"/><rect x="5" y="62.3" width="118" height="76" fill="none" stroke="#333" stroke-width=".6"/><path d="M5 66.4H123M45 62.3V66.4M85 62.3V66.4M98 62.3V66.4M106 62.3V66.4" stroke="#444" stroke-width=".45"/><rect x="6" y="63" width="18" height="1.2999999999999972" fill="#b9b9e0"/><rect x="6.3" y="63.3" width="17.4" height="0.7" fill="#34347a" opacity=".85"/><rect x="28" y="64.8" width="14" height="1.2000000000000028" fill="#b9b9e0"/><rect x="28.3" y="65.05000000000001" width="13.4" height="0.7" fill="#34347a" opacity=".85"/><rect x="50" y="64.8" width="10" height="1.2000000000000028" fill="#b9b9e0"/><rect x="50.3" y="65.05000000000001" width="9.4" height="0.7" fill="#34347a" opacity=".85"/><rect x="66" y="64.8" width="16" height="1.2000000000000028" fill="#b9b9e0"/><rect x="66.3" y="65.05000000000001" width="15.4" height="0.7" fill="#34347a" opacity=".85"/><rect x="88" y="63.5" width="8" height="1.0" fill="#b9b9e0"/><rect x="88.3" y="63.65" width="7.4" height="0.7" fill="#34347a" opacity=".85"/><rect x="108" y="63.5" width="12" height="1.0" fill="#b9b9e0"/><rect x="108.3" y="63.65" width="11.4" height="0.7" fill="#34347a" opacity=".85"/><rect x="6" y="67" width="24" height="1" fill="#b9b9e0"/><rect x="6.3" y="67.15" width="23.4" height="0.7" fill="#34347a" opacity=".85"/><rect x="6" y="68.6" width="20" height="1.0" fill="#b9b9e0"/><rect x="6.3" y="68.75" width="19.4" height="0.7" fill="#34347a" opacity=".85"/><rect x="6" y="70" width="22" height="1" fill="#b9b9e0"/><rect x="6.3" y="70.15" width="21.4" height="0.7" fill="#34347a" opacity=".85"/><rect x="6" y="71.5" width="16" height="1.0" fill="#b9b9e0"/><rect x="6.3" y="71.65" width="15.4" height="0.7" fill="#34347a" opacity=".85"/><rect x="5.2" y="77" width="31.3" height="1" fill="#b9b9e0"/><rect x="5.5" y="77.15" width="30.7" height="0.7" fill="#34347a" opacity=".85"/><rect x="5.2" y="79" width="96.3" height="1.2999999999999972" fill="#b9b9e0"/><rect x="5.5" y="79.30000000000001" width="95.7" height="0.7" fill="#34347a" opacity=".85"/><rect x="8" y="65.5" width="10" height="1.0" fill="#a6d8a6"/><rect x="8.3" y="65.65" width="9.4" height="0.7" fill="#2f6f2f" opacity=".85"/><rect x="30" y="65.5" width="15" height="1.0" fill="#a6d8a6"/><rect x="30.3" y="65.65" width="14.4" height="0.7" fill="#2f6f2f" opacity=".85"/><rect x="5.2" y="140" width="117.8" height="10.4" fill="none" stroke="#333" stroke-width=".6"/><path d="M23.2 140V150.4M40.4 140V150.4M57.7 140V150.4M72.3 140V150.4M86.9 140V150.4M104.6 140V150.4M40.4 144H86.9" stroke="#444" stroke-width=".45"/><rect x="8" y="141" width="9" height="1" fill="#a6d8a6"/><rect x="8.3" y="141.15" width="8.4" height="0.7" fill="#2f6f2f" opacity=".85"/><rect x="26" y="141" width="9" height="1" fill="#a6d8a6"/><rect x="26.3" y="141.15" width="8.4" height="0.7" fill="#2f6f2f" opacity=".85"/><rect x="44" y="141" width="9" height="1" fill="#a6d8a6"/><rect x="44.3" y="141.15" width="8.4" height="0.7" fill="#2f6f2f" opacity=".85"/><rect x="60" y="141" width="9" height="1" fill="#a6d8a6"/><rect x="60.3" y="141.15" width="8.4" height="0.7" fill="#2f6f2f" opacity=".85"/><rect x="75" y="141" width="9" height="1" fill="#a6d8a6"/><rect x="75.3" y="141.15" width="8.4" height="0.7" fill="#2f6f2f" opacity=".85"/><rect x="90" y="141" width="9" height="1" fill="#a6d8a6"/><rect x="90.3" y="141.15" width="8.4" height="0.7" fill="#2f6f2f" opacity=".85"/><rect x="108" y="141" width="9" height="1" fill="#a6d8a6"/><rect x="108.3" y="141.15" width="8.4" height="0.7" fill="#2f6f2f" opacity=".85"/><rect x="18" y="144.5" width="4" height="1.3000000000000114" fill="#b9b9e0"/><rect x="18.3" y="144.8" width="3.4" height="0.7" fill="#34347a" opacity=".85"/><rect x="33" y="145" width="5" height="1.3000000000000114" fill="#b9b9e0"/><rect x="33.3" y="145.3" width="4.4" height="0.7" fill="#34347a" opacity=".85"/><rect x="52" y="145" width="4" height="1.3000000000000114" fill="#b9b9e0"/><rect x="52.3" y="145.3" width="3.4" height="0.7" fill="#34347a" opacity=".85"/><rect x="62" y="145" width="8" height="1.3000000000000114" fill="#b9b9e0"/><rect x="62.3" y="145.3" width="7.4" height="0.7" fill="#34347a" opacity=".85"/><rect x="80" y="145" width="5" height="1.3000000000000114" fill="#b9b9e0"/><rect x="80.3" y="145.3" width="4.4" height="0.7" fill="#34347a" opacity=".85"/><rect x="112" y="144.5" width="9" height="1.3000000000000114" fill="#b9b9e0"/><rect x="112.3" y="144.8" width="8.4" height="0.7" fill="#34347a" opacity=".85"/><rect x="5.2" y="151.8" width="97.8" height="1.0" fill="#a6d8a6"/><rect x="5.5" y="151.95000000000002" width="97.2" height="0.7" fill="#2f6f2f" opacity=".85"/><rect x="5.2" y="153.2" width="79.8" height="1.0" fill="#a6d8a6"/><rect x="5.5" y="153.35" width="79.2" height="0.7" fill="#2f6f2f" opacity=".85"/><rect x="5.2" y="154.6" width="97.8" height="1.0" fill="#a6d8a6"/><rect x="5.5" y="154.75" width="97.2" height="0.7" fill="#2f6f2f" opacity=".85"/><rect x="62" y="157" width="5" height="1.3000000000000114" fill="#a6d8a6"/><rect x="62.3" y="157.3" width="4.4" height="0.7" fill="#2f6f2f" opacity=".85"/></svg>
<div class="a" style="left:418px;top:247px;width:41px;height:12px;background:#efefef;border-left:1px solid #cdcdcd;border-top:1px solid #cdcdcd;border-right:1px solid #e2e2e2"></div>
<div class="t" style="left:422px;top:248.5px;;transform:scaleX(0.84)">Scale: 7%</div>
<div class="a" style="left:460px;top:247px;width:63px;height:12px;background:#efefef;border-left:1px solid #cdcdcd;border-top:1px solid #cdcdcd;border-right:1px solid #e2e2e2"></div>
<div class="t" style="left:464px;top:248.5px;;transform:scaleX(0.84)">2552px x 3276px</div>
<div class="a" style="left:524px;top:247px;width:54px;height:12px;background:#efefef;border-left:1px solid #cdcdcd;border-top:1px solid #cdcdcd;border-right:1px solid #e2e2e2"></div>
<div class="t" style="left:527.3px;top:248.5px;;transform:scaleX(0.86)">8.51" x 10.92"</div>
<div class="a" style="left:579px;top:247px;width:34px;height:12px;background:#efefef;border-left:1px solid #cdcdcd;border-top:1px solid #cdcdcd;border-right:1px solid #e2e2e2"></div>
<div class="t" style="left:581.8px;top:248.5px;;transform:scaleX(0.87)">300 DPI</div>
<div class="a" style="left:614px;top:247px;width:58px;height:12px;background:#efefef;border-left:1px solid #cdcdcd;border-top:1px solid #cdcdcd;border-right:1px solid #e2e2e2"></div>
<div class="t" style="left:616.6px;top:248.5px;;transform:scaleX(0.93)">Black &amp; White</div>
<div class="a" style="left:418.6px;top:266px;width:48.5px;height:16px;background:#ededed;border:1px solid #dcdcdc;border-bottom:none"></div>
<div class="t" style="left:422.6px;top:266.5px;;transform:scaleX(0.83)">Layout View</div>
<div class="a" style="left:466.6px;top:266px;width:41.299999999999955px;height:16px;background:#ededed;border:1px solid #dcdcdc;border-bottom:none"></div>
<div class="t" style="left:471.5px;top:266.5px;;transform:scaleX(0.82)">Text View</div>
<div class="a" style="left:507.4px;top:266px;width:57.39999999999998px;height:16px;background:#ededed;border:1px solid #dcdcdc;border-bottom:none"></div>
<div class="t" style="left:511.9px;top:266.5px;;transform:scaleX(0.8)">Character View</div>
<div class="a" style="left:418px;top:281px;width:475px;height:213px;background:#fcfcfc;border-top:1px solid #dedede;border-right:1px solid #e6e6e6;border-bottom:1px solid #e6e6e6"></div>
<div class="a" style="left:564.5px;top:264.5px;width:48px;height:17px;background:#fbfbfb;border:1px solid #dedede;border-bottom:none"></div>
<div class="t" style="left:569.1px;top:266px;;transform:scaleX(0.81)">Diagnostics</div>
<div class="a" style="left:422px;top:282px;width:88px;height:208px;background:#fff;border:1px solid #a9a9a9"></div>
<svg style="left:426px;top:284px" width="11" height="9" viewBox="0 0 11 9"><path d="M0.5 1.5H3.5L4.5 0.5H9.5V8.5H0.5Z" fill="#e9c46a" stroke="#c9a040" stroke-width=".6"/><path d="M0.5 8.5L2.5 3.5H10.8L9 8.5Z" fill="#f6d98a" stroke="#c9a040" stroke-width=".6"/></svg>
<div class="t" style="left:439.6px;top:283.8px;;transform:scaleX(0.795)">OCR Profile Example</div>
<svg style="left:431px;top:293px" width="1" height="18" viewBox="0 0 1 18"><path d="M0.5 0V18" stroke="#999" stroke-dasharray="1 1"/></svg>
<svg style="left:431px;top:299px" width="9" height="1" viewBox="0 0 9 1"><path d="M0 0.5H9" stroke="#999" stroke-dasharray="1 1"/></svg>
<svg style="left:431px;top:310px" width="9" height="1" viewBox="0 0 9 1"><path d="M0 0.5H9" stroke="#999" stroke-dasharray="1 1"/></svg>
<svg style="left:439.5px;top:295.5px" width="10" height="8" viewBox="0 0 10 8"><rect x="0.5" y="0.5" width="9" height="7" fill="#e6e6e6" stroke="#9a9a9a" stroke-width=".6"/><path d="M2 6L4.5 3L6.5 5L8 3.5V6.5H2Z" fill="#d85a2a"/><path d="M2.5 6.5L5.5 4.5L8 6.5" fill="none" stroke="#5aa84a" stroke-width=".8"/></svg>
<div class="t" style="left:453.5px;top:294px;;transform:scaleX(0.79)">IP Image</div>
<svg style="left:440.5px;top:305px" width="8" height="11" viewBox="0 0 8 11"><path d="M0.5 0.5H5.5L7.5 2.5V10.5H0.5Z" fill="#f2f2f2" stroke="#9a9a9a" stroke-width=".6"/><path d="M2 4H6M2 5.5H6M2 7H6M2 8.5H6" stroke="#bbb" stroke-width=".6"/></svg>
<div class="a" style="left:452px;top:305.6px;width:50px;height:9.6px;background:#e3e3e3"></div>
<div class="t" style="left:453.5px;top:305px;;transform:scaleX(0.815)">Execution Log</div>
<div class="a" style="left:423px;top:477px;width:86px;height:12px;background:#f0f0f0"></div>
<div class="a" style="left:435px;top:478px;width:61px;height:10px;background:#cdcdcd"></div>
<svg style="left:427px;top:480px" width="4" height="6" viewBox="0 0 4 6"><path d="M3.5 0.5L0.8 3L3.5 5.5" fill="none" stroke="#555" stroke-width=".9"/></svg>
<svg style="left:500px;top:480px" width="4" height="6" viewBox="0 0 4 6"><path d="M0.5 0.5L3.2 3L0.5 5.5" fill="none" stroke="#555" stroke-width=".9"/></svg>
<div class="a" style="left:512px;top:282px;width:377px;height:208px;background:#fff;border:1px solid #a9a9a9"></div>
<div class="a" style="left:877px;top:283px;width:11px;height:206px;background:#f0f0f0"></div>
<svg style="left:879px;top:287px" width="7" height="4" viewBox="0 0 7 4"><path d="M0.5 3.5L3.5 0.8L6.5 3.5" fill="none" stroke="#bdbdbd" stroke-width="1"/></svg>
<svg style="left:879px;top:480px" width="7" height="4" viewBox="0 0 7 4"><path d="M0.5 0.5L3.5 3.2L6.5 0.5" fill="none" stroke="#bdbdbd" stroke-width="1"/></svg>
<div class="a" style="left:510px;top:311px;width:320px;height:41px;background:#fbf162;border:1px solid #eec41e"></div>
<div class="m" style="left:516.8px;top:284px">Executing OCR Profile 'OCR Profile Example'
Main OCR process took 714ms and produced 1,560 characters.  Dominant
Language: en
Segment repaired from: '1F5W68"' (67%) to '1875%76 B"' (81%)
Segment repaired from: '~.zace"~' (66%) to 'Manufacturing' (99%)
Segment repaired from: 'MA20ONLY' (87%) to 'MA20 ONLY' (97%)
8 segments reprocessed though OCR - 3 repaired.
Synthesis added 12 control characters and spaces.
OCR took 1,000 ms</div>
</body></html>
